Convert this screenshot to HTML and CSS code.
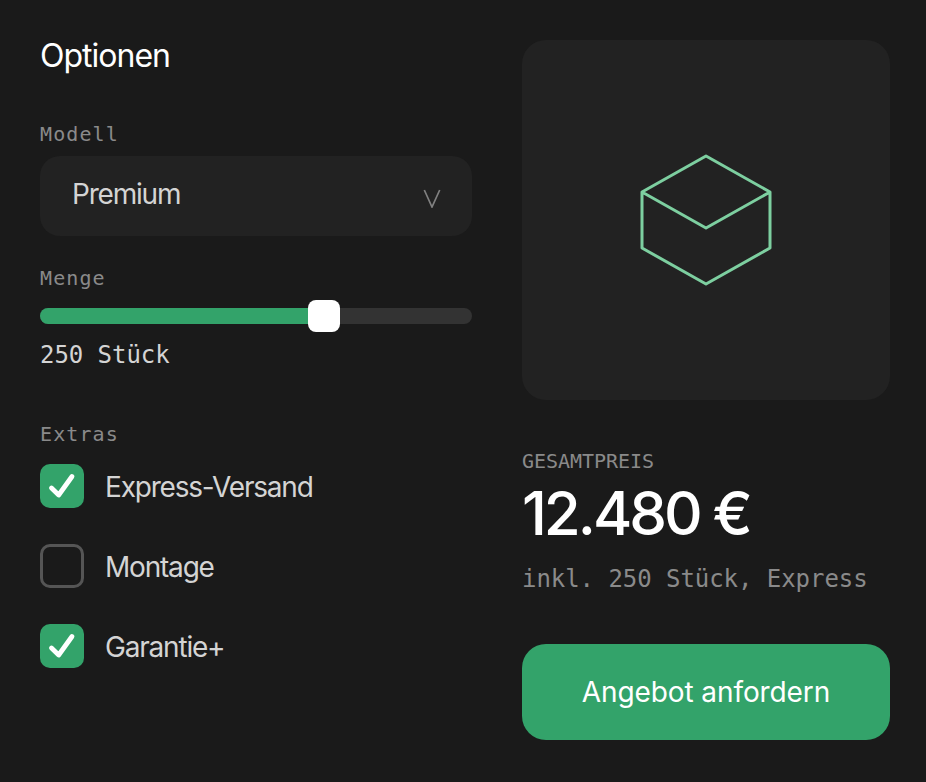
FILE: index.html
```html
<!DOCTYPE html>
<html lang="de">
<head>
<meta charset="utf-8">
<title>Optionen</title>
<link rel="stylesheet" href="styles.css">
</head>
<body>
<main class="page">
  <section class="options">
    <h1 class="title">Optionen</h1>
    <div class="label label-model">Modell</div>
    <div class="select">
      <span class="select-value">Premium</span>
      <svg class="chevron" width="20" height="20" viewBox="0 0 20 20" fill="none"><path d="M2.3 2 L10 19 L17.7 2" stroke="#808080" stroke-width="1.7"/></svg>
    </div>
    <div class="label label-qty">Menge</div>
    <div class="slider">
      <div class="slider-fill"></div>
      <div class="slider-thumb"></div>
    </div>
    <div class="qty">250 Stück</div>
    <div class="label label-extras">Extras</div>
    <div class="checks">
      <div class="check-row">
        <span class="box on"><svg width="44" height="44" viewBox="0 0 44 44" fill="none"><path d="M11.5 24 L18.7 31 L32 12.5" stroke="#fff" stroke-width="4.8" stroke-linecap="round" stroke-linejoin="round"/></svg></span>
        <span class="check-text">Express-Versand</span>
      </div>
      <div class="check-row">
        <span class="box"></span>
        <span class="check-text">Montage</span>
      </div>
      <div class="check-row">
        <span class="box on"><svg width="44" height="44" viewBox="0 0 44 44" fill="none"><path d="M11.5 24 L18.7 31 L32 12.5" stroke="#fff" stroke-width="4.8" stroke-linecap="round" stroke-linejoin="round"/></svg></span>
        <span class="check-text">Garantie+</span>
      </div>
    </div>
  </section>
  <section class="summary">
    <div class="preview">
      <svg width="132" height="132" viewBox="0 0 132 132" fill="none"><path d="M66 2 L130 38 L130 94 L66 130 L2 94 L2 38 Z M2 38 L66 74 L130 38" stroke="#7dcfa0" stroke-width="3" stroke-linejoin="round"/></svg>
    </div>
    <div class="total-label">GESAMTPREIS</div>
    <div class="total">12.480 €</div>
    <div class="note">inkl. 250 Stück, Express</div>
    <button class="cta">Angebot anfordern</button>
  </section>
</main>
</body>
</html>
```
FILE: styles.css
```css
* { box-sizing: border-box; }
html, body { margin: 0; height: 100%; background: #1a1a1a; overflow: hidden; }
body { font-family: Inter, "Liberation Sans", sans-serif; color: #fff; }
.page { display: flex; gap: 50px; padding: 40px 36px 42px 40px; height: 782px; }
.options { width: 432px; flex: none; display: flex; flex-direction: column; }
.summary { width: 368px; flex: none; display: flex; flex-direction: column; }
.title { margin: 1px 0 0; font-size: 32px; line-height: 30px; font-weight: 400; letter-spacing: -1px; }
.label { font-family: "DejaVu Sans Mono", monospace; font-size: 20px; line-height: 24px; letter-spacing: 1.1px; color: #8a8a8a; }
.label-model { margin-top: 51px; }
.select { margin-top: 10px; height: 80px; border-radius: 20px; background: #222; padding: 0 30px 0 32px; display: flex; align-items: center; justify-content: space-between; font-size: 28px; color: #d4d4d4; letter-spacing: -1.2px; }
.select-value { margin-top: -4px; }
.chevron { margin-top: 4px; }
.label-qty { margin-top: 30px; }
.slider { position: relative; margin-top: 18px; height: 16px; border-radius: 8px; background: #333; }
.slider-fill { width: 284px; height: 16px; border-radius: 8px; background: #33a36a; }
.slider-thumb { position: absolute; left: 268px; top: -8px; width: 32px; height: 32px; border-radius: 8px; background: #fff; }
.qty { margin-top: 17px; font-family: "DejaVu Sans Mono", monospace; font-size: 24px; line-height: 28px; letter-spacing: -0.05px; color: #d4d4d4; }
.label-extras { margin-top: 53px; }
.checks { margin-top: 18px; display: flex; flex-direction: column; gap: 36px; }
.check-row { display: flex; align-items: center; gap: 21px; font-size: 28px; height: 44px; color: #d4d4d4; letter-spacing: -1.2px; }
.check-text { margin-top: 1px; }
.box { width: 44px; height: 44px; flex: none; border-radius: 10px; border: 3px solid #555; }
.box.on { border: 0; background: #33a36a; }
.box svg { display: block; }
.preview { height: 360px; border-radius: 24px; background: #222; display: flex; align-items: center; justify-content: center; }
.total-label { margin-top: 49px; font-family: "DejaVu Sans Mono", monospace; font-size: 20px; line-height: 24px; letter-spacing: -0.04px; color: #8a8a8a; }
.total { margin-top: 6px; font-size: 60px; line-height: 68px; font-weight: 500; letter-spacing: -3.05px; }
.note { margin-top: 18px; font-family: "DejaVu Sans Mono", monospace; font-size: 24px; line-height: 28px; letter-spacing: -0.05px; color: #8a8a8a; }
.cta { margin-top: 51px; height: 96px; width: 100%; border: 0; border-radius: 24px; background: #33a36a; color: #fff; font: 400 28px Inter, "Liberation Sans", sans-serif; letter-spacing: -0.1px; }
```
